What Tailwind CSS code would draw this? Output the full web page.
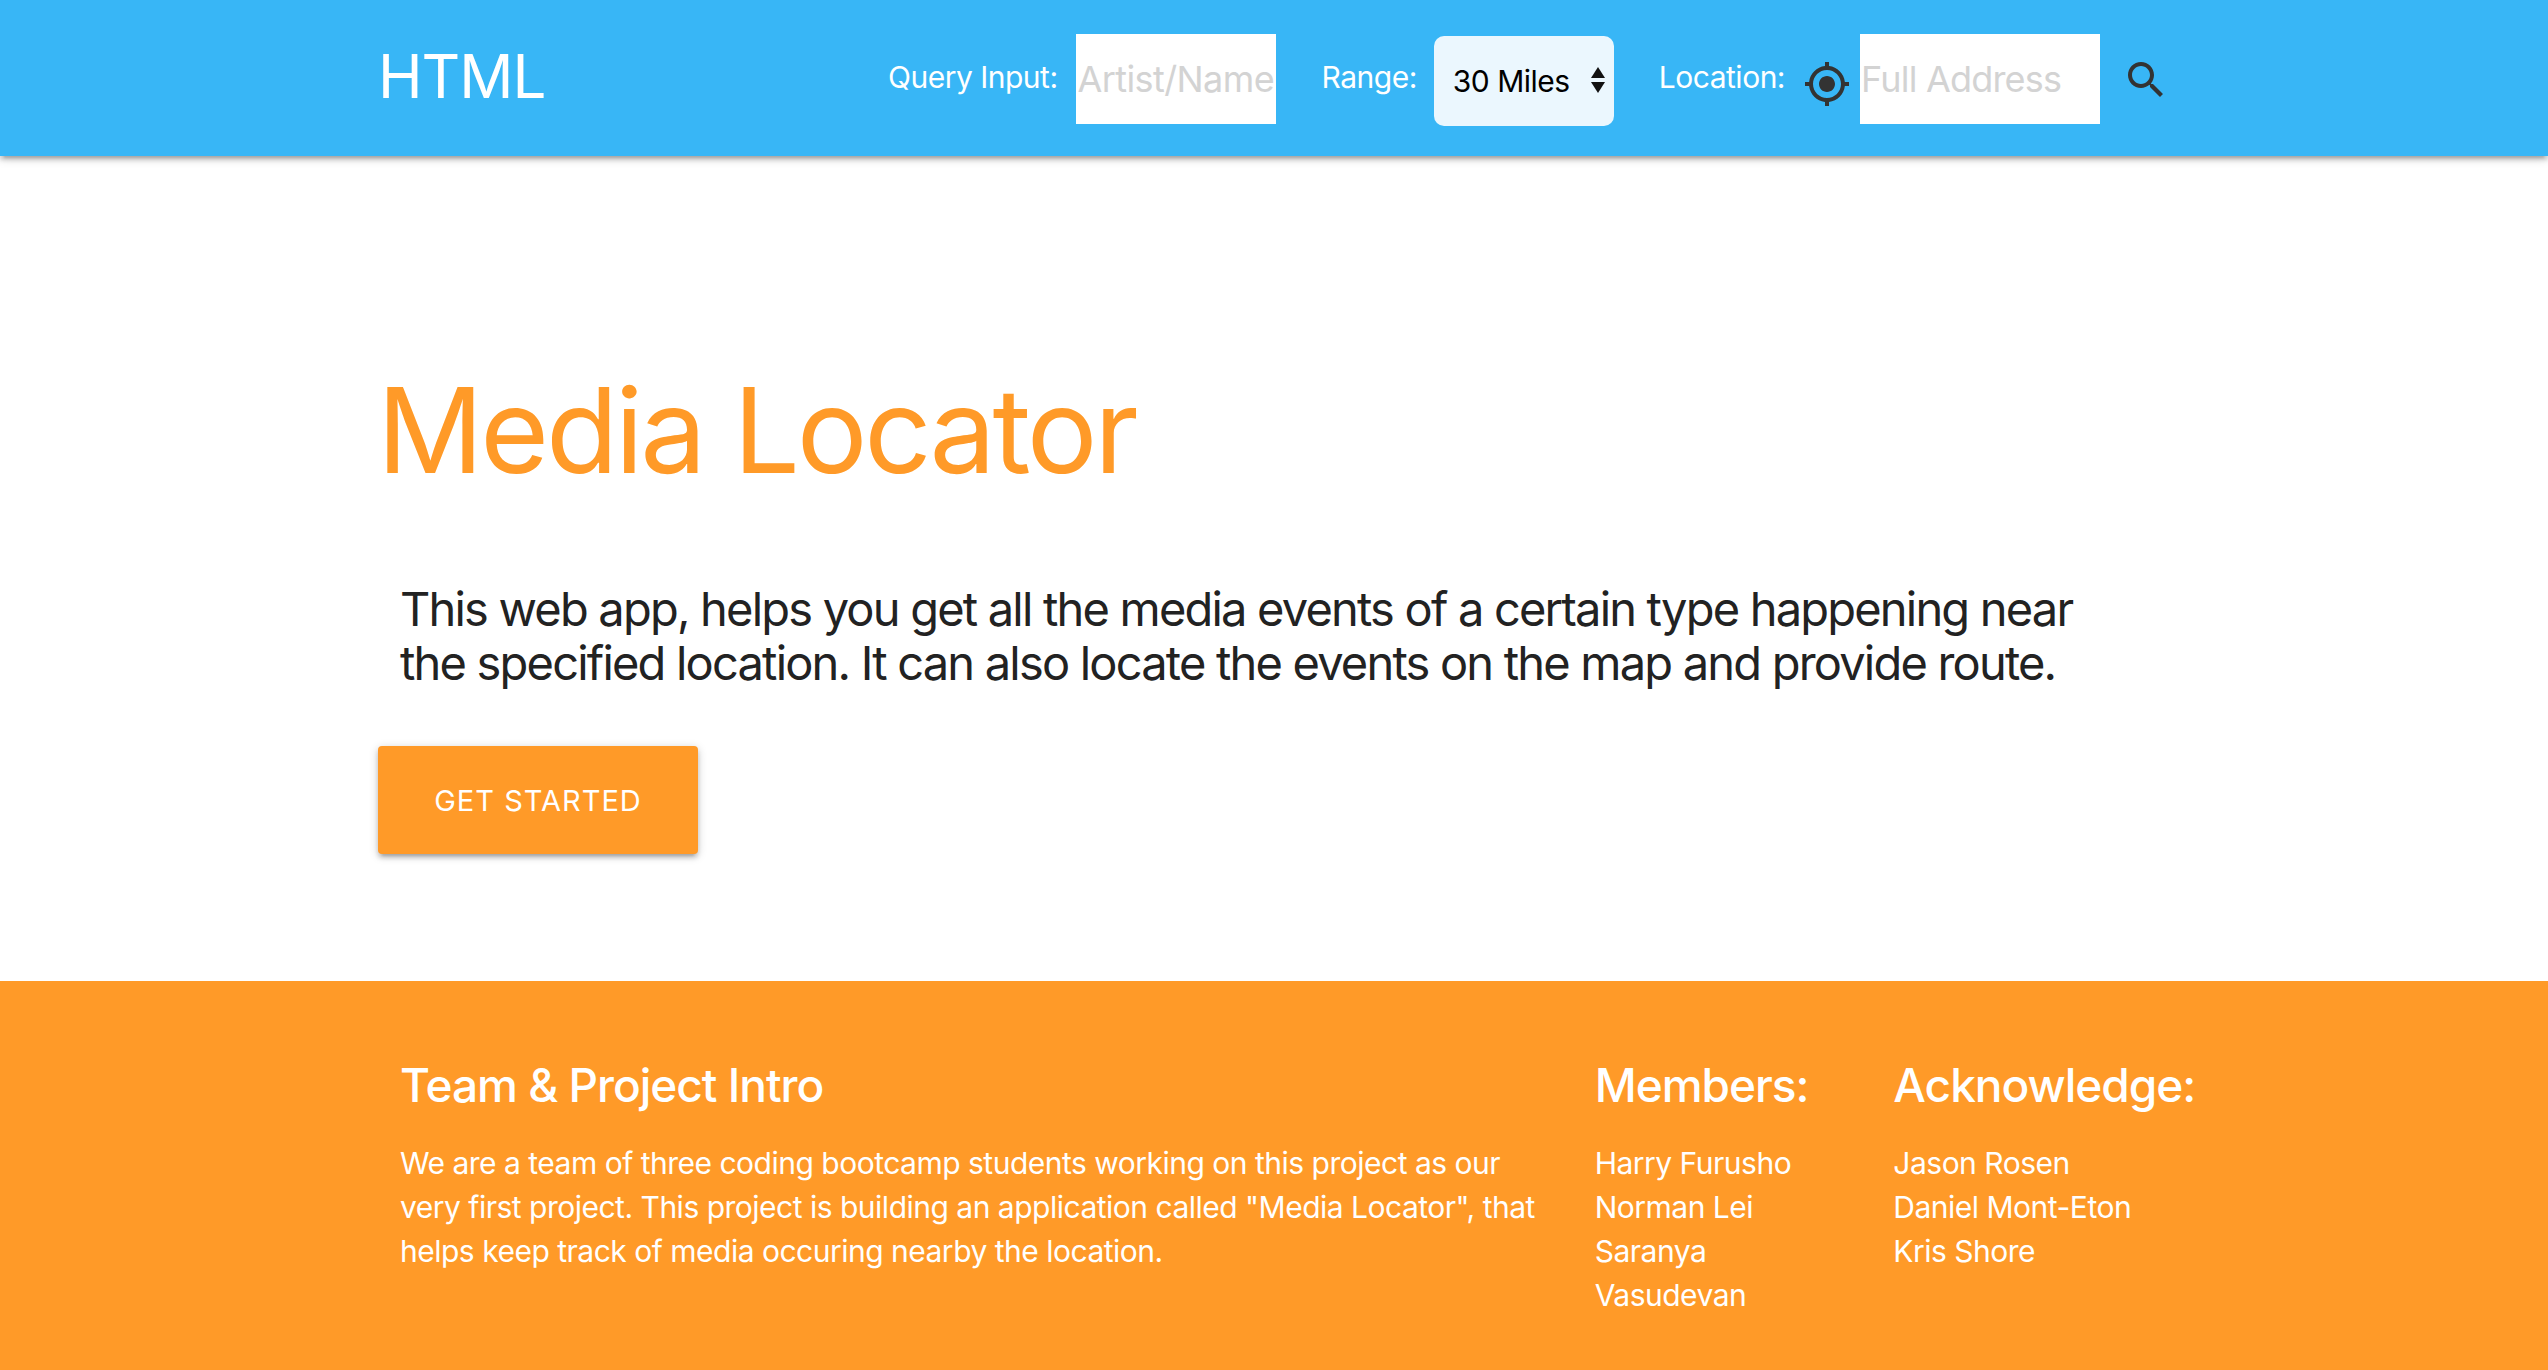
<!DOCTYPE html>
<html lang="en">
<head>
  <meta charset="UTF-8">
  <meta name="viewport" content="width=device-width, initial-scale=1.0">
  <title>Media Locator</title>
  <script src="https://cdn.jsdelivr.net/npm/@tailwindcss/browser@4"></script>
</head>
<body class="bg-white font-['Inter',sans-serif] min-h-screen flex flex-col overflow-hidden">

  <!-- navbar -->
  <nav class="relative z-10 h-[156px] bg-[#38b6f6] text-white shadow-[0_4px_4px_rgba(0,0,0,0.14),0_6px_2px_-4px_rgba(0,0,0,0.12),0_2px_10px_rgba(0,0,0,0.2)]">
    <div class="w-[1792px] mx-auto h-full flex items-center">
      <a href="#" class="text-[60px] leading-none tracking-[-1px] -mt-[4px]">HTML</a>
      <form class="ml-auto mt-[2px] flex items-center">
        <label class="text-[30px] tracking-[-0.5px] -mt-[3px]">Query Input:</label>
        <input type="text" placeholder="Artist/Name" class="ml-[18px] w-[200px] h-[90px] bg-white text-[36px] tracking-[-0.6px] pl-[2px] placeholder:text-[#d3d3d3]">
        <label class="ml-[46px] text-[30px] tracking-[-0.5px] -mt-[3px]">Range:</label>
        <div class="relative ml-[17px] mt-[4px]">
          <select class="appearance-none w-[180px] h-[90px] rounded-[10px] bg-[#ebf7fe] text-black text-[30px] tracking-[-0.5px] pl-[19px]">
            <option>30 Miles</option>
          </select>
          <svg class="absolute right-[8px] top-[30px] w-[16px] h-[28px]" viewBox="0 0 16 28" fill="#111"><path d="M8 1 15 12H1z"/><path d="M8 27 1 16h14z"/></svg>
        </div>
        <label class="ml-[45px] text-[30px] tracking-[-0.5px] -mt-[3px]">Location:</label>
        <svg class="ml-[18px] mt-[10px] w-[48px] h-[48px]" viewBox="0 0 24 24" fill="#333"><path d="M12 8c-2.21 0-4 1.79-4 4s1.79 4 4 4 4-1.79 4-4-1.79-4-4-4zm8.94 3c-.46-4.17-3.77-7.48-7.94-7.94V1h-2v2.06C6.83 3.52 3.52 6.83 3.06 11H1v2h2.06c.46 4.17 3.77 7.48 7.94 7.94V23h2v-2.06c4.17-.46 7.48-3.77 7.94-7.94H23v-2h-2.06zM12 19c-3.87 0-7-3.13-7-7s3.13-7 7-7 7 3.13 7 7-3.13 7-7 7z"/></svg>
        <input type="text" placeholder="Full Address" class="ml-[9px] w-[240px] h-[90px] bg-white text-[36px] tracking-[-0.8px] pl-[1px] placeholder:text-[#d3d3d3]">
        <svg class="ml-[22px] mt-[2px] w-[48px] h-[48px]" viewBox="0 0 24 24" fill="#333"><path d="M15.5 14h-.79l-.28-.27C15.41 12.59 16 11.11 16 9.5 16 5.91 13.09 3 9.5 3S3 5.91 3 9.5 5.91 16 9.5 16c1.61 0 3.09-.59 4.23-1.57l.27.28v.79l5 4.99L20.49 19l-4.99-5zm-6 0C7.01 14 5 11.99 5 9.5S7.01 5 9.5 5 14 7.01 14 9.5 11.99 14 9.5 14z"/></svg>
      </form>
    </div>
  </nav>

  <!-- hero -->
  <main class="h-[825px] w-[1792px] mx-auto">
    <h1 class="pt-[210px] -ml-[1px] text-[118px] leading-[1.1] tracking-[-3.25px] text-[#ff9a28]">Media Locator</h1>
    <p class="mt-[86px] px-[22px] text-[47px] leading-[54px] tracking-[-1.8px] text-[#222]">This web app, helps you get all the media events of a certain type happening near the specified location. It can also locate the events on the map and provide route.</p>
    <a href="#" class="mt-[56px] pt-[2px] flex items-center justify-center w-[320px] h-[108px] rounded-[4px] bg-[#ff9a28] text-white text-[29px] tracking-[1px] shadow-[0_4px_4px_rgba(0,0,0,0.14),0_6px_2px_-4px_rgba(0,0,0,0.12),0_2px_10px_rgba(0,0,0,0.2)]">GET STARTED</a>
  </main>

  <!-- footer -->
  <footer class="flex-1 bg-[#ff9a28] text-white">
    <div class="w-[1792px] mx-auto grid grid-cols-12 pt-[79px]">
      <div class="col-span-8 px-[22px]">
        <h5 class="text-[46px] font-medium leading-[1.1] tracking-[-1px]">Team &amp; Project Intro</h5>
        <p class="mt-[30px] text-[30px] leading-[44px] tracking-[-0.5px]">We are a team of three coding bootcamp students working on this project as our very first project. This project is building an application called "Media Locator", that helps keep track of media occuring nearby the location.</p>
      </div>
      <div class="col-span-2 px-[22px]">
        <h5 class="text-[46px] font-medium leading-[1.1] tracking-[-1px]">Members:</h5>
        <ul class="mt-[30px] text-[30px] leading-[44px] tracking-[-0.5px]">
          <li>Harry Furusho</li>
          <li>Norman Lei</li>
          <li>Saranya Vasudevan</li>
        </ul>
      </div>
      <div class="col-span-2 px-[22px]">
        <h5 class="text-[46px] font-medium leading-[1.1] tracking-[-1px] whitespace-nowrap">Acknowledge:</h5>
        <ul class="mt-[30px] text-[30px] leading-[44px] tracking-[-0.5px]">
          <li>Jason Rosen</li>
          <li>Daniel Mont-Eton</li>
          <li>Kris Shore</li>
        </ul>
      </div>
    </div>
  </footer>
</body>
</html>
